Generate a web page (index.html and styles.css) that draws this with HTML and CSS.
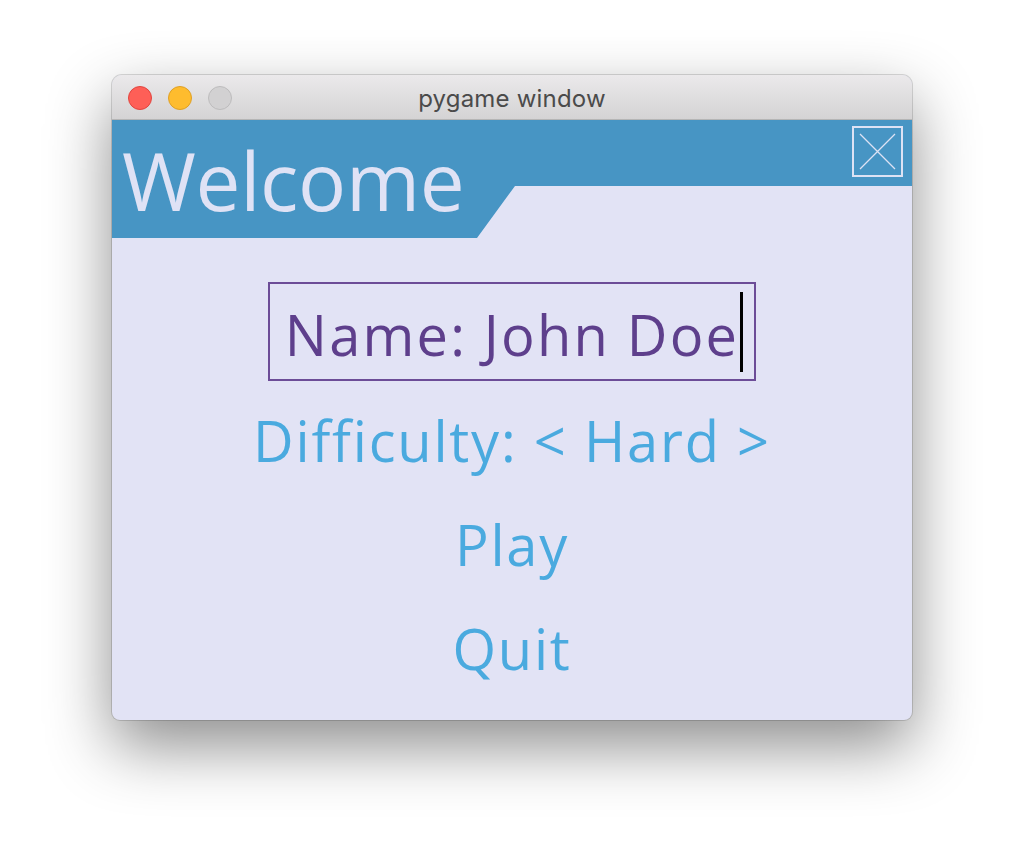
FILE: index.html
```html
<!DOCTYPE html>
<html>
<head>
<meta charset="utf-8">
<link rel="stylesheet" href="styles.css">
</head>
<body>
<div class="window">
  <div class="titlebar">
    <div class="lights">
      <span class="light red"></span>
      <span class="light yellow"></span>
      <span class="light grey"></span>
    </div>
    <div class="title">pygame window</div>
  </div>
  <div class="content">
    <div class="header">
      <div class="header-shape"></div>
      <div class="welcome">Welcome</div>
      <div class="close">
        <svg width="47" height="47" viewBox="0 0 47 47"><path d="M6 6 L41 41 M41 6 L6 41" stroke="#dde2f4" stroke-width="1.3" fill="none"/></svg>
      </div>
    </div>
    <div class="menu">
      <div class="item name-row">
        <div class="textbox"><span class="tb-text">Name: John Doe</span><span class="cursor"></span></div>
      </div>
      <div class="item">Difficulty: &lt; Hard &gt;</div>
      <div class="item">Play</div>
      <div class="item">Quit</div>
    </div>
  </div>
</div>
</body>
</html>
```

FILE: styles.css
```css
html, body {
  margin: 0;
  padding: 0;
  background: #ffffff;
}
body {
  padding: 75px 0 0 112px;
  width: 1024px;
  height: 868px;
  box-sizing: border-box;
  overflow: hidden;
}
.window {
  width: 800px;
  height: 645px;
  border-radius: 10px 10px 8px 8px;
  overflow: hidden;
  box-shadow: 0 26px 64px rgba(0,0,0,0.45), 0 0 0 1px rgba(0,0,0,0.14);
  display: flex;
  flex-direction: column;
  background: #e2e3f5;
}
.titlebar {
  height: 44px;
  flex: none;
  background: linear-gradient(#ebe9eb, #d4d3d4);
  border-bottom: 1px solid #b5b5b5;
  position: relative;
  display: flex;
  align-items: center;
  justify-content: center;
}
.lights {
  position: absolute;
  left: 16px;
  top: 11px;
  display: flex;
  gap: 16px;
}
.light {
  width: 24px;
  height: 24px;
  border-radius: 50%;
  box-sizing: border-box;
}
.red { background: #fe5f57; border: 1px solid #e1453f; }
.yellow { background: #febc2e; border: 1px solid #dfa025; }
.grey { background: #d2d1d2; border: 1px solid #bdbcbd; }
.title {
  font-family: Inter, "Liberation Sans", sans-serif;
  font-size: 24px;
  color: #4b4b4b;
  letter-spacing: 0.2px;
  margin-top: 2px;
}
.content {
  flex: 1;
  display: flex;
  flex-direction: column;
  font-family: "Open Sans", "Noto Sans", sans-serif;
}
.header {
  position: relative;
  height: 118px;
  display: flex;
  justify-content: space-between;
  align-items: flex-start;
  padding: 0 9px 0 9px;
}
.header-shape {
  position: absolute;
  inset: 0;
  background: #4795c4;
  clip-path: polygon(0 0, 800px 0, 800px 66px, 403px 66px, 365px 118px, 0 118px);
}
.welcome {
  position: relative;
  font-size: 80px;
  line-height: 112px;
  margin-top: 4px;
  margin-left: 1px;
  color: #dfe2f5;
  letter-spacing: -0.3px;
}
.close {
  position: relative;
  margin-top: 6px;
  width: 51px;
  height: 51px;
  box-sizing: border-box;
  border: 2px solid #dde2f4;
}
.close svg { display: block; }
.menu {
  display: flex;
  flex-direction: column;
  align-items: center;
  padding-top: 44px;
}
.item {
  height: 104px;
  line-height: 104px;
  font-size: 56px;
  color: #4aaadf;
  white-space: nowrap;
  letter-spacing: 1.8px;
}
.name-row {
  height: 99px;
  line-height: normal;
  margin-bottom: 7px;
}
.textbox {
  box-sizing: border-box;
  height: 99px;
  border: 2px solid #6c4c97;
  color: #5e3f8c;
  padding: 6px 11px 0 15px;
  line-height: 89px;
  display: flex;
  align-items: flex-start;
}
.tb-text {
  letter-spacing: 2.2px;
  margin-right: -1px;
}
.cursor {
  display: inline-block;
  width: 3px;
  height: 80px;
  background: #000;
  margin-top: 2px;
  margin-left: 2px;
}
```
